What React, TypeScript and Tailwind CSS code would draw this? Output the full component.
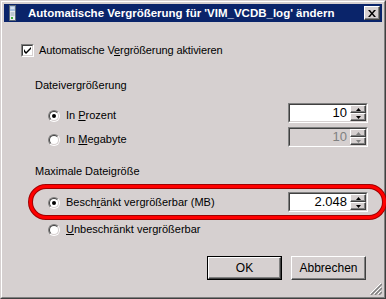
import React from 'react';

const face = 'bg-[#d6d0d0]';

function Radio({ checked }: { checked?: boolean }) {
  return (
    <div className="w-[12px] h-[12px] rounded-full border border-t-[#808080] border-l-[#808080] border-r-white border-b-white">
      <div className="w-full h-full rounded-full border border-t-[#404040] border-l-[#404040] border-r-[#d6d0d0] border-b-[#d6d0d0] bg-white flex items-center justify-center">
        {checked && <div className="w-[4px] h-[4px] rounded-full bg-black" />}
      </div>
    </div>
  );
}

function Arrow({ up, disabled }: { up?: boolean; disabled?: boolean }) {
  const c = disabled ? '#808080' : '#000';
  return (
    <svg width="5" height="3" viewBox="0 0 5 3">
      {up ? <path d="M2.5 0 L5 3 L0 3 Z" fill={c} /> : <path d="M0 0 L5 0 L2.5 3 Z" fill={c} />}
    </svg>
  );
}

function SpinBox({ value, disabled }: { value: string; disabled?: boolean }) {
  const btn =
    'h-[8px] flex items-center justify-center bg-[#d6d0d0] border border-t-white border-l-white border-r-[#404040] border-b-[#404040] shadow-[inset_-1px_-1px_#808080]';
  return (
    <div className="w-[80px] h-[20px] border border-t-[#808080] border-l-[#808080] border-r-white border-b-white">
      <div
        className={`w-full h-full flex border border-t-[#404040] border-l-[#404040] border-r-[#d6d0d0] border-b-[#d6d0d0] ${
          disabled ? 'bg-[#d6d0d0] text-[#808080]' : 'bg-white text-black'
        }`}
      >
        <div className="flex-1 text-right pr-[3px] text-[13px] leading-[16px]">{value}</div>
        <div className="w-[16px] flex flex-col">
          <div className={btn}>
            <Arrow up disabled={disabled} />
          </div>
          <div className={btn}>
            <Arrow disabled={disabled} />
          </div>
        </div>
      </div>
    </div>
  );
}

function Button({ children, isDefault }: { children: React.ReactNode; isDefault?: boolean }) {
  return (
    <div className={`w-[75px] h-[24px] ${isDefault ? 'border border-black' : ''}`}>
      <div className="w-full h-full flex items-center justify-center border border-t-white border-l-white border-r-[#404040] border-b-[#404040] shadow-[inset_-1px_-1px_#808080] text-[12px]">
        {children}
      </div>
    </div>
  );
}

export default function App() {
  return (
    <div className="w-[386px] h-[299px] font-['Liberation_Sans',Arial,sans-serif] text-black">
      <div className="relative w-full h-full border border-t-[#d6d0d0] border-l-[#d6d0d0] border-r-[#404040] border-b-[#404040]">
        <div className={`w-full h-full border border-t-white border-l-white border-r-[#808080] border-b-[#808080] ${face} p-[2px] flex flex-col`}>
          {/* Title bar */}
          <div className="h-[18px] bg-[#0a246a] flex items-center pl-[5px] pr-[2px]">
            <svg width="8" height="16" viewBox="0 0 8 16" className="shrink-0">
              <rect x="0.5" y="0.5" width="6" height="15" fill="#e8ecf0" stroke="#5a6878" />
              <rect x="1" y="1" width="5" height="5" fill="#a8c0e0" />
              <line x1="1.5" y1="3" x2="5.5" y2="3" stroke="#ffffff" />
              <line x1="1.5" y1="8" x2="5.5" y2="8" stroke="#90a0b0" />
              <line x1="1.5" y1="10" x2="5.5" y2="10" stroke="#90a0b0" />
              <rect x="2" y="12" width="2" height="2" fill="#40b040" />
            </svg>
            <div className="ml-[11px] flex-1 text-white font-bold text-[11.5px] leading-[18px] whitespace-nowrap">
              Automatische Vergrößerung für 'VIM_VCDB_log' ändern
            </div>
            <div className="w-[16px] h-[14px] border border-t-white border-l-white border-r-[#404040] border-b-[#404040] shadow-[inset_-1px_-1px_#808080] bg-[#d6d0d0] flex items-center justify-center">
              <svg width="8" height="7" viewBox="0 0 8 7">
                <path d="M0 0h2l2 2.5L6 0h2L5 3.5 8 7H6L4 4.5 2 7H0l3-3.5z" fill="#000" />
              </svg>
            </div>
          </div>

          {/* Content */}
          <div className="flex-1 flex flex-col text-[11px] leading-[13px]">
            <div className="mt-[22px] h-[13px] flex items-center pl-[17px]">
              <div className="w-[13px] h-[13px] border border-t-[#808080] border-l-[#808080] border-r-white border-b-white">
                <div className="w-full h-full border border-t-[#404040] border-l-[#404040] border-r-[#d6d0d0] border-b-[#d6d0d0] bg-white flex items-center justify-center">
                  <svg width="7" height="7" viewBox="0 0 7 7">
                    <path d="M0 2 L0 5 L2 7 L7 2 L7 0 L2 5 Z" fill="#000" />
                  </svg>
                </div>
              </div>
              <span className="ml-[5px] tracking-[-0.1px]">
                Automatische V<span className="underline">e</span>rgrößerung aktivieren
              </span>
            </div>

            <div className="mt-[22px] pl-[31px]">Dateivergrößerung</div>

            <div className="mt-[11px] flex justify-between pr-[14px]">
              <div className="mt-[6px] h-[13px] flex items-center pl-[44px] gap-[6px]">
                <Radio checked />
                <span>
                  In <span className="underline">P</span>rozent
                </span>
              </div>
              <SpinBox value="10" />
            </div>

            <div className="mt-[4px] flex justify-between pr-[14px]">
              <div className="mt-[6px] h-[13px] flex items-center pl-[44px] gap-[6px]">
                <Radio />
                <span>
                  In <span className="underline">M</span>egabyte
                </span>
              </div>
              <SpinBox value="10" disabled />
            </div>

            <div className="mt-[18px] pl-[31px]">Maximale Dateigröße</div>

            <div className="mt-[14px] flex justify-between pr-[14px]">
              <div className="mt-[4px] h-[13px] flex items-center pl-[44px] gap-[6px]">
                <Radio checked />
                <span>
                  Besch<span className="underline">r</span>änkt vergrößerbar (MB)
                </span>
              </div>
              <SpinBox value="2.048" />
            </div>

            <div className="mt-[11px] h-[13px] flex items-center pl-[44px] gap-[6px]">
              <Radio />
              <span>
                <span className="underline">U</span>nbeschränkt vergrößerbar
              </span>
            </div>

            <div className="mt-[20px] flex justify-end gap-[9px] pr-[16px]">
              <Button isDefault>OK</Button>
              <Button>Abbrechen</Button>
            </div>
          </div>
        </div>

        {/* resize grip */}
        <svg width="12" height="12" viewBox="0 0 12 12" className="absolute right-[3px] bottom-[3px]">
          <path d="M11 0 L0 11 M11 4 L4 11 M11 8 L8 11" stroke="#ffffff" strokeWidth="1" />
          <path d="M12 1 L1 12 M12 5 L5 12 M12 9 L9 12" stroke="#808080" strokeWidth="1.5" />
        </svg>

        {/* red annotation */}
        <svg width="358" height="36" viewBox="0 0 358 36" className="absolute left-[27px] top-[183px]">
          <rect x="2.5" y="2.5" width="354" height="31" rx="15.5" fill="none" stroke="#a00000" strokeWidth="5" />
          <rect x="2.5" y="2.5" width="354" height="31" rx="15.5" fill="none" stroke="#ff0000" strokeWidth="3" />
        </svg>
      </div>
    </div>
  );
}
